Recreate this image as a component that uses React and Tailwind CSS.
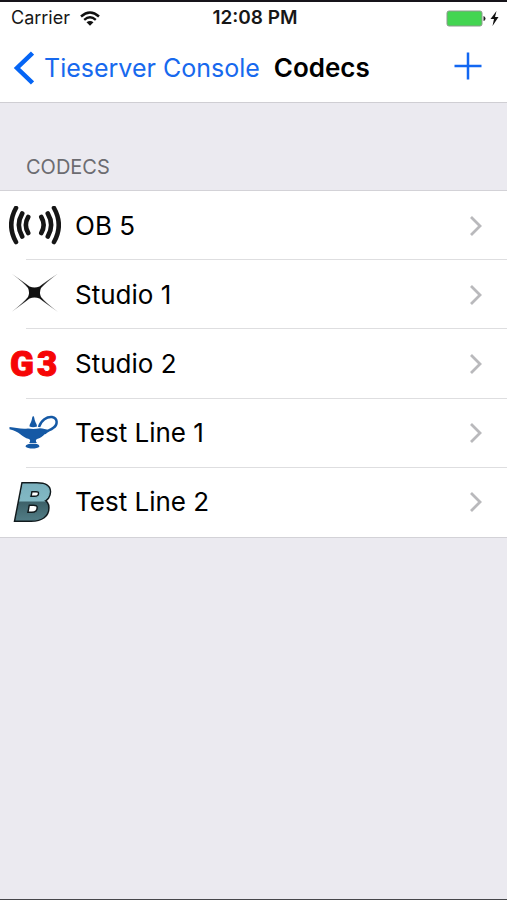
import React from "react";

function WaveIcon() {
  return (
    <svg viewBox="0 0 52 40" className="h-10 w-[52px]" fill="none" stroke="#151515" strokeWidth="4.600" strokeLinecap="round" aria-hidden="true">
      <path d="M7 2Q-2.500 19 7 36M13.200 7.500Q6.500 19 13.200 30.500M19.200 11Q14.500 19 19.200 27" />
      <path d="M45 2Q54.500 19 45 36M38.800 7.500Q45.500 19 38.800 30.500M32.300 11Q37 19 32.300 27" />
    </svg>
  );
}

function StarIcon() {
  return (
    <svg viewBox="0 0 52 40" className="h-10 w-[52px] overflow-visible" aria-hidden="true">
      <defs>
        <radialGradient id="flare" gradientUnits="userSpaceOnUse" cx="25.500" cy="17.500" r="30">
          <stop offset="0.300" stopColor="#111" />
          <stop offset="1" stopColor="#999" />
        </radialGradient>
      </defs>
      <path d="M2.500 -1.500Q16 8 20.500 11.500Q25.500 13.500 30.500 11.500Q36 7 49 -1.500Q36 8.500 32 13Q30 17.500 32 22Q36 27 49 37Q36 28 30.500 23.500Q25.500 21.500 20.500 23.500Q15 28 2.500 37Q15 27 19 22Q21 17.500 19 13Q15 8 2.500 -1.500Z" fill="url(#flare)" />
    </svg>
  );
}

function G3Icon() {
  return (
    <svg viewBox="0 0 52 40" className="h-10 w-[52px] overflow-visible font-['Roboto',sans-serif] text-[35px] font-black" fill="#f60606" stroke="#f60606" strokeWidth="1" aria-hidden="true">
      <text x="1" y="32">G</text>
      <text x="28" y="32">3</text>
    </svg>
  );
}

function LampIcon() {
  return (
    <svg viewBox="0 0 52 40" className="h-10 w-[52px]" fill="#1559a5" aria-hidden="true">
      <path d="M0.500 14C7 14.500 12 16.500 19 15.500Q25 16.500 31 15.200C34 15.500 37 16 40.500 17.500C36.500 19 34.500 24.500 28 26C26.500 27 26.500 28.500 28 30H20C21.500 28.500 21.500 27 20 26C12.500 24 11 18.500 0.500 16.200Z" />
      <path d="M16.500 33.500C17 31.300 20 30.800 24 30.800S30 31.300 30.500 33.500C28 36.300 19 36.300 16.500 33.500Z" />
      <path d="M20.500 13.500C20.500 10.500 22.500 10 23.200 4.500C23.700 2.500 24.700 2.500 25.200 4.500C26 10 28 10.500 28 13.500Q24 14.800 20.500 13.500Z" />
      <path d="M30 14C32 7 38 3.500 43 4C49 5 49 12 44 15C41 17.500 38 17 35.500 20.500" fill="none" stroke="#1559a5" strokeWidth="2.500" />
    </svg>
  );
}

function BIcon() {
  return (
    <svg viewBox="0 0 52 40" className="h-10 w-[52px] overflow-visible font-['DejaVu_Sans',sans-serif] text-[49px] font-bold italic" aria-hidden="true">
      <defs>
        <linearGradient id="steel" gradientUnits="userSpaceOnUse" x1="0" y1="0" x2="0" y2="39">
          <stop offset="0" stopColor="#79b0bd" />
          <stop offset="0.480" stopColor="#82b8c3" />
          <stop offset="0.520" stopColor="#3d6169" />
          <stop offset="1" stopColor="#527d86" />
        </linearGradient>
      </defs>
      <text x="6" y="38" fill="#111a1d" stroke="#111a1d" strokeWidth="4">B</text>
      <text x="6" y="38" fill="url(#steel)" stroke="url(#steel)" strokeWidth="1">B</text>
    </svg>
  );
}

const codecs = [
  { name: "OB 5", Icon: WaveIcon },
  { name: "Studio 1", Icon: StarIcon },
  { name: "Studio 2", Icon: G3Icon },
  { name: "Test Line 1", Icon: LampIcon },
  { name: "Test Line 2", Icon: BIcon },
];

function StatusBar() {
  return (
    <div className="grid h-8 grid-cols-3 items-center pl-[11px] pr-2 text-[18px] leading-6 text-[#171717]">
      <div className="flex items-center gap-2.5">
        <span>Carrier</span>
        <svg viewBox="0 0 20 15" className="h-[15px] w-5" fill="none" stroke="#111" strokeWidth="2.400" role="img" aria-label="Wi-Fi">
          <path d="M1 5.500Q10-2.500 19 5.500M4.200 8.800Q10 3.800 15.800 8.800" />
          <path d="M6.500 11.300Q10 8.500 13.500 11.300L10 14.800Z" fill="#111" stroke="none" />
        </svg>
      </div>
      <span className="whitespace-nowrap text-center text-[19px] font-semibold">12:08 PM</span>
      <div className="flex items-center justify-end gap-1">
        <svg viewBox="0 0 40 17" className="h-[17px] w-10" role="img" aria-label="Battery full">
          <rect x="1" y="1" width="35" height="15" rx="2" fill="#43d551" stroke="#8c9a8d" />
          <path d="M37.500 6Q39.500 6.500 39.500 8.500T37.500 11Z" fill="#222" />
        </svg>
        <svg viewBox="0 0 9 15" className="h-[15px] w-[9px]" fill="#111" role="img" aria-label="Charging">
          <path d="M6.500 0L0.500 8H4L2.500 15L8.500 6H5Z" />
        </svg>
      </div>
    </div>
  );
}

export default function App() {
  return (
    <div className="flex min-h-screen flex-col border-b border-t-2 border-b-[#46464a] border-t-[#17141a] bg-[#ebeaf0] font-['Inter','Liberation_Sans',sans-serif] text-black">
      <header className="border-b border-[#cfced3] bg-white">
        <StatusBar />
        <nav className="flex h-[68px] items-center pl-[13px] pr-[25px] text-[26px] leading-8">
          <a href="#console" className="flex items-center gap-2.5 whitespace-nowrap text-[25px] text-[#1769ee]">
            <svg viewBox="0 0 21 34" className="h-[34px] w-[21px]" fill="none" stroke="#0565f5" strokeWidth="4.500" aria-hidden="true">
              <path d="M19.500 2L4 17L19.500 32" />
            </svg>
            Tieserver Console
          </a>
          <h1 className="ml-3.5 font-semibold">Codecs</h1>
          <button type="button" aria-label="Add codec" className="mb-1 ml-auto">
            <svg viewBox="0 0 28 28" className="h-7 w-7" fill="none" stroke="#1267f2" strokeWidth="2.500" aria-hidden="true">
              <path d="M14 0.500V27.500M0.500 14H27.500" />
            </svg>
          </button>
        </nav>
      </header>
      <main>
        <h2 className="px-[26px] pb-[11px] pt-[52px] text-[20px] leading-6 text-[#6c6c71]">CODECS</h2>
        <ul className="grid h-[348px] auto-rows-fr border-y border-[#d3d2d7] bg-white">
          {codecs.map(({ name, Icon }) => (
            <li key={name} className="group flex">
              <a href="#codec" className="relative flex flex-1 items-center pl-[9px] pr-6 text-[26px] leading-8 after:absolute after:bottom-0 after:left-[26px] after:right-0 after:h-px after:bg-[#dedee0] group-last:after:hidden">
                <Icon />
                <span className="ml-3.5">{name}</span>
                <svg viewBox="0 0 14 22" className="ml-auto h-[22px] w-3.5" fill="none" stroke="#b9b9bc" strokeWidth="2.800" aria-hidden="true">
                  <path d="M2 2L11 11L2 20" />
                </svg>
              </a>
            </li>
          ))}
        </ul>
      </main>
    </div>
  );
}
